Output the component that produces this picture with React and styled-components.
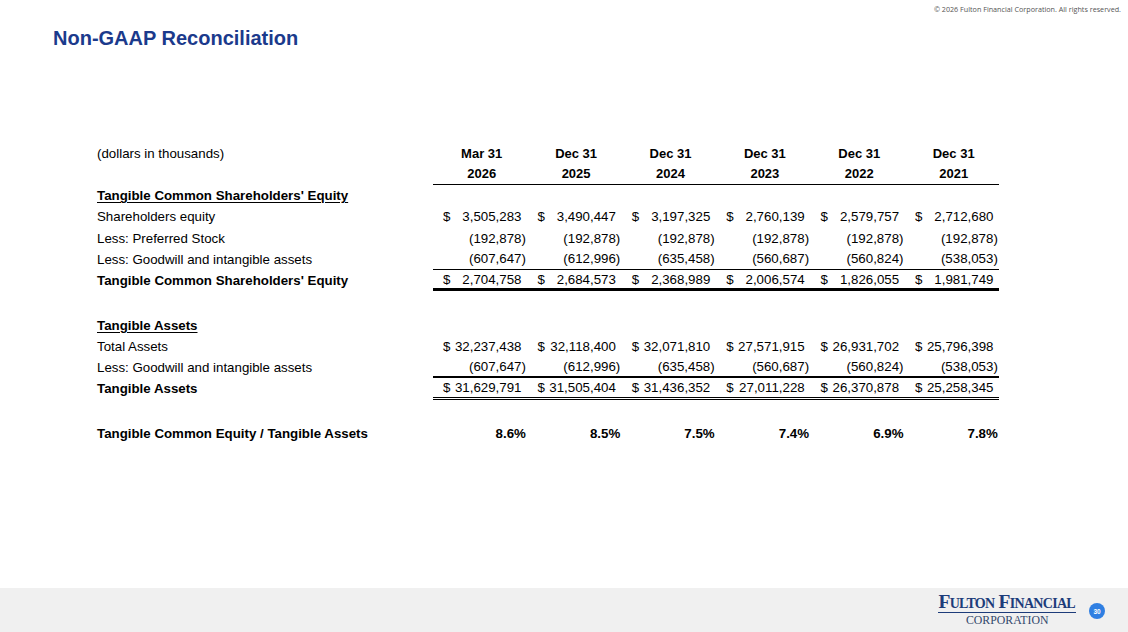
import React from "react";
import styled, { createGlobalStyle } from "styled-components";

const Global = createGlobalStyle`
  html, body { margin: 0; padding: 0; background: #fff; }
  body { font-family: "Liberation Sans", Arial, sans-serif; color: #000; }
  * { box-sizing: border-box; }
`;

const Page = styled.div`
  width: 1128px;
  height: 632px;
  display: flex;
  flex-direction: column;
  overflow: hidden;
  background: #fff;
`;

const TopBar = styled.div`
  display: flex;
  justify-content: flex-end;
  padding: 4px 7px 0 0;
  height: 14px;
  font-family: "Open Sans", sans-serif;
  font-size: 7.2px;
  line-height: 10px;
  color: #555;
`;

const Title = styled.h1`
  margin: 12.5px 0 0 53px;
  font-family: "Liberation Sans", Arial, sans-serif;
  font-weight: 700;
  font-size: 20px;
  line-height: 23px;
  color: #1b3a8c;
`;

const TableWrap = styled.div`
  margin: 93.5px 0 0 97px;
  display: flex;
  flex-direction: column;
`;

const Row = styled.div`
  display: grid;
  grid-template-columns: 336px repeat(6, 94.4px);
  height: ${(p) => p.$h || 21.25}px;
  font-size: 13.3px;
`;

const Label = styled.div`
  display: flex;
  align-items: center;
  font-weight: ${(p) => (p.$bold ? 700 : 400)};
  white-space: nowrap;
  span {
    text-decoration: ${(p) => (p.$underline ? "underline" : "none")};
    text-underline-offset: 2px;
    text-decoration-thickness: 1px;
  }
`;

const borders = {
  none: "none",
  thin: "1px solid #000",
  medium: "2px solid #000",
  thick: "3px solid #000",
  double: "3px double #000",
};

const Cell = styled.div`
  display: flex;
  align-items: center;
  justify-content: space-between;
  padding: 0 1.5px 0 10px;
  border-bottom: ${(p) => borders[p.$border || "none"]};
  white-space: nowrap;
  font-weight: ${(p) => (p.$bold ? 700 : 400)};
`;

const HeadCell = styled.div`
  display: flex;
  align-items: center;
  justify-content: center;
  padding-left: 3px;
  font-weight: 700;
  font-size: 13px;
  border-bottom: ${(p) => borders[p.$border || "none"]};
`;

const HeadRow = styled(Row)`
  height: ${(p) => p.$h || 21.25}px;
`;

const Dollar = styled.span``;

const Amount = styled.span`
  margin-left: auto;
  padding-right: ${(p) => (p.$neg ? 0 : 4.4)}px;
`;

const Footer = styled.div`
  margin-top: auto;
  height: 44px;
  background: #f0f0f0;
  display: flex;
  align-items: center;
  justify-content: flex-end;
  padding-right: 23px;
  gap: 13px;
`;

const Logo = styled.div`
  display: flex;
  flex-direction: column;
  align-items: center;
  font-family: "Liberation Serif", "Times New Roman", serif;
  margin-top: -1px;
`;

const LogoMain = styled.div`
  font-size: 19.5px;
  font-weight: 700;
  font-variant: small-caps;
  letter-spacing: -0.7px;
  line-height: 18px;
  color: #1d3c7a;
  border-bottom: 1.5px solid #1d3c7a;
  padding: 0 1px 1px 0;
`;

const LogoSub = styled.div`
  font-size: 11.8px;
  line-height: 13px;
  color: #33486c;
  margin-top: 1px;
`;

const PageNum = styled.div`
  width: 16px;
  height: 16px;
  border-radius: 50%;
  background: #2f7fe2;
  color: #fff;
  font-family: "Liberation Sans", Arial, sans-serif;
  font-weight: 700;
  font-size: 6.5px;
  display: flex;
  align-items: center;
  justify-content: center;
  margin-top: 2px;
`;

const headers = [
  ["Mar 31", "2026"],
  ["Dec 31", "2025"],
  ["Dec 31", "2024"],
  ["Dec 31", "2023"],
  ["Dec 31", "2022"],
  ["Dec 31", "2021"],
];

const gw1 = ["(607,647)", "(612,996)", "(635,458)", "(560,687)", "(560,824)", "(538,053)"];

const rows = [
  { type: "head", label: "Tangible Common Shareholders' Equity", bold: true, underline: true, h: 21.75 },
  {
    label: "Shareholders equity",
    dollar: true,
    values: ["3,505,283", "3,490,447", "3,197,325", "2,760,139", "2,579,757", "2,712,680"],
  },
  { label: "Less: Preferred Stock", values: Array(6).fill("(192,878)") },
  { label: "Less: Goodwill and intangible assets", values: gw1, border: "thin" },
  {
    label: "Tangible Common Shareholders' Equity",
    bold: true,
    dollar: true,
    values: ["2,704,758", "2,684,573", "2,368,989", "2,006,574", "1,826,055", "1,981,749"],
    border: "thick",
  },
  { type: "blank", h: 23.25 },
  { type: "head", label: "Tangible Assets", bold: true, underline: true },
  {
    label: "Total Assets",
    dollar: true,
    values: ["32,237,438", "32,118,400", "32,071,810", "27,571,915", "26,931,702", "25,796,398"],
  },
  { label: "Less: Goodwill and intangible assets", values: gw1, border: "medium" },
  {
    label: "Tangible Assets",
    bold: true,
    dollar: true,
    values: ["31,629,791", "31,505,404", "31,436,352", "27,011,228", "26,370,878", "25,258,345"],
    border: "double",
  },
  { type: "blank", h: 23 },
  {
    label: "Tangible Common Equity / Tangible Assets",
    bold: true,
    pct: true,
    values: ["8.6%", "8.5%", "7.5%", "7.4%", "6.9%", "7.8%"],
  },
];

export default function App() {
  return (
    <>
      <Global />
      <Page>
        <TopBar>© 2026 Fulton Financial Corporation. All rights reserved.</TopBar>
        <Title>Non-GAAP Reconciliation</Title>
        <TableWrap>
          <HeadRow>
            <Label>
              <span>(dollars in thousands)</span>
            </Label>
            {headers.map((h, i) => (
              <HeadCell key={i}>{h[0]}</HeadCell>
            ))}
          </HeadRow>
          <HeadRow $h={20.25}>
            <Label />
            {headers.map((h, i) => (
              <HeadCell key={i} $border="thin">
                {h[1]}
              </HeadCell>
            ))}
          </HeadRow>
          {rows.map((r, ri) => {
            if (r.type === "blank") return <Row key={ri} $h={r.h} />;
            return (
              <Row key={ri} $h={r.h}>
                <Label $bold={r.bold} $underline={r.underline}>
                  <span>{r.label}</span>
                </Label>
                {r.type === "head"
                  ? headers.map((_, i) => <Cell key={i} />)
                  : r.values.map((v, i) => {
                      const neg = v.startsWith("(") || r.pct;
                      return (
                        <Cell key={i} $border={r.border} $bold={r.pct}>
                          {r.dollar ? <Dollar>$</Dollar> : null}
                          <Amount $neg={neg}>{v}</Amount>
                        </Cell>
                      );
                    })}
              </Row>
            );
          })}
        </TableWrap>
        <Footer>
          <Logo>
            <LogoMain>Fulton Financial</LogoMain>
            <LogoSub>CORPORATION</LogoSub>
          </Logo>
          <PageNum>30</PageNum>
        </Footer>
      </Page>
    </>
  );
}
